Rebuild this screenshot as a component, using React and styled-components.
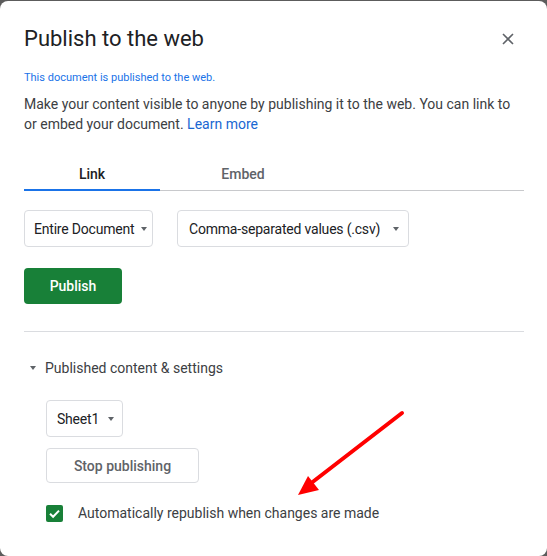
import React from "react";
import styled, { createGlobalStyle } from "styled-components";

const GlobalStyle = createGlobalStyle`
  html, body { margin: 0; padding: 0; }
  body {
    background: #5c5c5c;
    font-family: Roboto, "Noto Sans", Arial, sans-serif;
    -webkit-font-smoothing: antialiased;
  }
  * { box-sizing: border-box; }
`;

const Dialog = styled.div`
  position: relative;
  width: 547px;
  height: 555px;
  margin-top: 1px;
  background: #ffffff;
  border-radius: 8px;
  padding: 24px 24px 0 24px;
  overflow: hidden;
`;

const Header = styled.div`
  display: flex;
  align-items: center;
  justify-content: space-between;
  height: 28px;
`;

const Title = styled.h1`
  margin: 0;
  font-size: 22px;
  line-height: 28px;
  font-weight: 400;
  color: #202124;
`;

const CloseButton = styled.button`
  width: 30px;
  height: 30px;
  display: flex;
  align-items: center;
  justify-content: center;
  border: none;
  background: transparent;
  padding: 0;
  cursor: pointer;
`;

const Status = styled.div`
  margin-top: 17px;
  font-size: 11px;
  line-height: 16px;
  color: #1a73e8;
`;

const Paragraph = styled.p`
  margin: 8px 0 0 0;
  font-size: 14px;
  line-height: 20px;
  color: #3c4043;
`;

const Link = styled.a`
  color: #1967d2;
  text-decoration: none;
`;

const TabBar = styled.div`
  display: flex;
  width: 500px;
  margin-top: 20px;
  box-shadow: inset 0 -1px 0 #c8c9cc;
`;

const Tab = styled.div`
  width: ${(p) => p.$w}px;
  height: 37px;
  padding-top: 5px;
  line-height: 30px;
  text-align: center;
  font-size: 14px;
  font-weight: 500;
  color: ${(p) => (p.$active ? "#202124" : "#5f6368")};
  border-bottom: 2px solid ${(p) => (p.$active ? "#1a73e8" : "transparent")};
`;

const SelectRow = styled.div`
  display: flex;
  gap: 24px;
  margin-top: 19px;
`;

const Select = styled.div`
  display: inline-flex;
  align-items: center;
  justify-content: space-between;
  width: ${(p) => p.$w}px;
  height: 37px;
  padding: 0 ${(p) => p.$pr || 6}px 0 ${(p) => p.$pl || 9}px;
  border: 1px solid #dadce0;
  border-radius: 4px;
  font-size: 14px;
  letter-spacing: -0.2px;
  color: #202124;
  background: #fff;
`;

const Caret = styled.span`
  display: inline-block;
  flex-shrink: 0;
  width: 0;
  height: 0;
  border-left: 3.5px solid transparent;
  border-right: 3.5px solid transparent;
  border-top: 4px solid #5f6368;
`;

const PrimaryButton = styled.button`
  display: block;
  margin-top: 21px;
  width: 98px;
  height: 36px;
  border: none;
  border-radius: 4px;
  background: #188038;
  color: #fff;
  font-family: inherit;
  font-size: 14px;
  font-weight: 500;
`;

const Divider = styled.hr`
  margin: 27px 0 0 0;
  border: none;
  width: 500px;
  height: 1px;
  background: #dadce0;
`;

const SectionHeader = styled.div`
  display: flex;
  align-items: center;
  gap: 9px;
  margin-top: 26px;
  padding-left: 6px;
  font-size: 14px;
  line-height: 20px;
  color: #3c4043;
`;

const SectionBody = styled.div`
  padding-left: 22px;
  display: flex;
  flex-direction: column;
  align-items: flex-start;
`;

const SheetSelect = styled(Select)`
  margin-top: 22px;
`;

const SecondaryButton = styled.button`
  margin-top: 11px;
  width: 153px;
  height: 35px;
  border: 1px solid #dadce0;
  border-radius: 4px;
  background: #fff;
  color: #5f6368;
  font-family: inherit;
  font-size: 14px;
  font-weight: 500;
`;

const CheckRow = styled.label`
  display: flex;
  align-items: center;
  gap: 15px;
  margin-top: 20px;
  height: 20px;
  font-size: 14px;
  color: #3c4043;
`;

const CheckBox = styled.span`
  width: 17px;
  height: 17px;
  border-radius: 2px;
  background: #188038;
  display: flex;
  align-items: center;
  justify-content: center;
`;

const Annotation = styled.svg`
  position: absolute;
  left: 0;
  top: -1px;
  pointer-events: none;
`;

export default function App() {
  return (
    <>
      <GlobalStyle />
      <Dialog>
        <Header>
          <Title>Publish to the web</Title>
          <CloseButton aria-label="Close">
            <svg width="12" height="12" viewBox="0 0 12 12">
              <path d="M1 1 L11 11 M11 1 L1 11" stroke="#5f6368" strokeWidth="1.6" />
            </svg>
          </CloseButton>
        </Header>
        <Status>This document is published to the web.</Status>
        <Paragraph>
          Make your content visible to anyone by publishing it to the web. You can link to or
          embed your document. <Link href="#">Learn more</Link>
        </Paragraph>
        <TabBar>
          <Tab $w={136} $active>Link</Tab>
          <Tab $w={166}>Embed</Tab>
        </TabBar>
        <SelectRow>
          <Select $w={129} $pr={5}>
            Entire Document <Caret />
          </Select>
          <Select $w={232} $pl={11} $pr={9}>
            Comma-separated values (.csv) <Caret />
          </Select>
        </SelectRow>
        <PrimaryButton>Publish</PrimaryButton>
        <Divider />
        <SectionHeader>
          <Caret />
          Published content &amp; settings
        </SectionHeader>
        <SectionBody>
          <SheetSelect $w={77} $pl={10} $pr={8}>
            Sheet1 <Caret />
          </SheetSelect>
          <SecondaryButton>Stop publishing</SecondaryButton>
          <CheckRow>
            <CheckBox>
              <svg width="13" height="13" viewBox="0 0 13 13">
                <path d="M2 6.8 L5.1 9.8 L11 3.6" fill="none" stroke="#fff" strokeWidth="2" />
              </svg>
            </CheckBox>
            Automatically republish when changes are made
          </CheckRow>
        </SectionBody>
        <Annotation width="547" height="556" viewBox="0 0 547 556">
          <line x1="402" y1="413" x2="310" y2="484" stroke="#ff0000" strokeWidth="4" strokeLinecap="round" />
          <polygon points="298,495 308,476 319,490" fill="#ff0000" />
        </Annotation>
      </Dialog>
    </>
  );
}
